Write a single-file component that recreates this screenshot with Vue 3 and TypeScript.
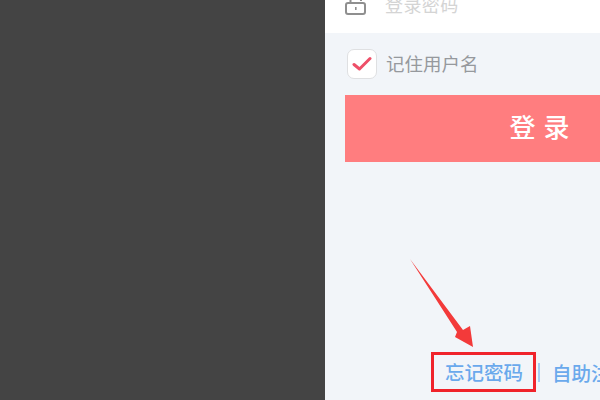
<script setup lang="ts">
const links: string[] = ['忘记密码', '自助注册']
</script>

<template>
  <div class="page">
    <aside class="side"></aside>
    <main class="panel">
      <div class="field">
        <svg class="lock" width="22" height="18" viewBox="0 0 22 18" fill="none">
          <path d="M5.5 5V2.5C5.5-1 16-1 16 2.5V3" stroke="#8f8f8f" stroke-width="2" />
          <rect x="1" y="5" width="19" height="11" rx="2" stroke="#8f8f8f" stroke-width="2" />
          <rect x="10" y="9" width="1.6" height="3" fill="#8f8f8f" />
        </svg>
        <span class="placeholder">登录密码</span>
      </div>
      <label class="remember">
        <span class="box">
          <svg width="20" height="16" viewBox="0 0 20 16" fill="none">
            <path d="M2 8.5L7.5 13L18 2.5" stroke="#ee4f68" stroke-width="3" stroke-linecap="round" stroke-linejoin="round" />
          </svg>
        </span>
        <span class="remember-text">记住用户名</span>
      </label>
      <button class="login" type="button">登 录</button>
      <nav class="links">
        <span class="link forgot">{{ links[0] }}</span>
        <span class="sep"></span>
        <span class="link">{{ links[1] }}</span>
      </nav>
      <svg class="arrow" width="80" height="100" viewBox="0 0 80 100">
        <path d="M1 1L54 72L61 68L64 89L46 79L48 74Z" fill="#f33a3a" />
      </svg>
    </main>
  </div>
</template>

<style scoped>
.page {
  display: flex;
  width: 600px;
  height: 400px;
  overflow: hidden;
  font-family: "Noto Sans CJK SC", "Noto Sans", sans-serif;
}
.side {
  width: 325px;
  flex: none;
  background: #444444;
}
.panel {
  position: relative;
  flex: 1;
  display: flex;
  flex-direction: column;
  min-width: 0;
  background: #f2f5f9;
}
.field {
  display: flex;
  align-items: center;
  gap: 18px;
  height: 56px;
  margin-top: -23px;
  padding-left: 20px;
  background: #ffffff;
  flex: none;
}
.lock {
  flex: none;
  margin-top: 3px;
}
.placeholder {
  font-size: 18px;
  letter-spacing: 0.4px;
  margin-top: -2px;
  color: #d4d4d4;
}
.remember {
  display: flex;
  align-items: center;
  gap: 9px;
  margin: 16px 0 0 22px;
  height: 30px;
}
.box {
  display: flex;
  align-items: center;
  justify-content: center;
  box-sizing: border-box;
  width: 30px;
  height: 30px;
  background: #ffffff;
  border: 1px solid #dfe0e2;
  border-radius: 7px;
}
.remember-text {
  font-size: 18.5px;
  color: #96999d;
  margin-top: -2px;
}
.login {
  display: block;
  flex: none;
  width: 255px;
  height: 67px;
  margin: 16px 0 0 20px;
  padding: 0 0 6px 135px;
  border: 0;
  background: #ff7d7f;
  color: #ffffff;
  font-family: inherit;
  font-size: 26px;
  font-weight: 500;
  letter-spacing: 1px;
  text-align: center;
}
.links {
  display: flex;
  align-items: center;
  margin: auto 0 8px 106px;
  height: 40px;
  white-space: nowrap;
}
.link {
  flex: none;
  font-size: 19.5px;
  font-weight: 500;
  color: #6aa9ec;
}
.forgot {
  box-sizing: border-box;
  width: 105px;
  height: 40px;
  line-height: 34px;
  padding-left: 11px;
  border: 3px solid #f0232b;
}
.sep {
  width: 2px;
  height: 19px;
  margin: 0 12px 0 2px;
  background: #a9cdf2;
  flex: none;
}
.arrow {
  position: absolute;
  left: 84px;
  top: 258px;
}
</style>
